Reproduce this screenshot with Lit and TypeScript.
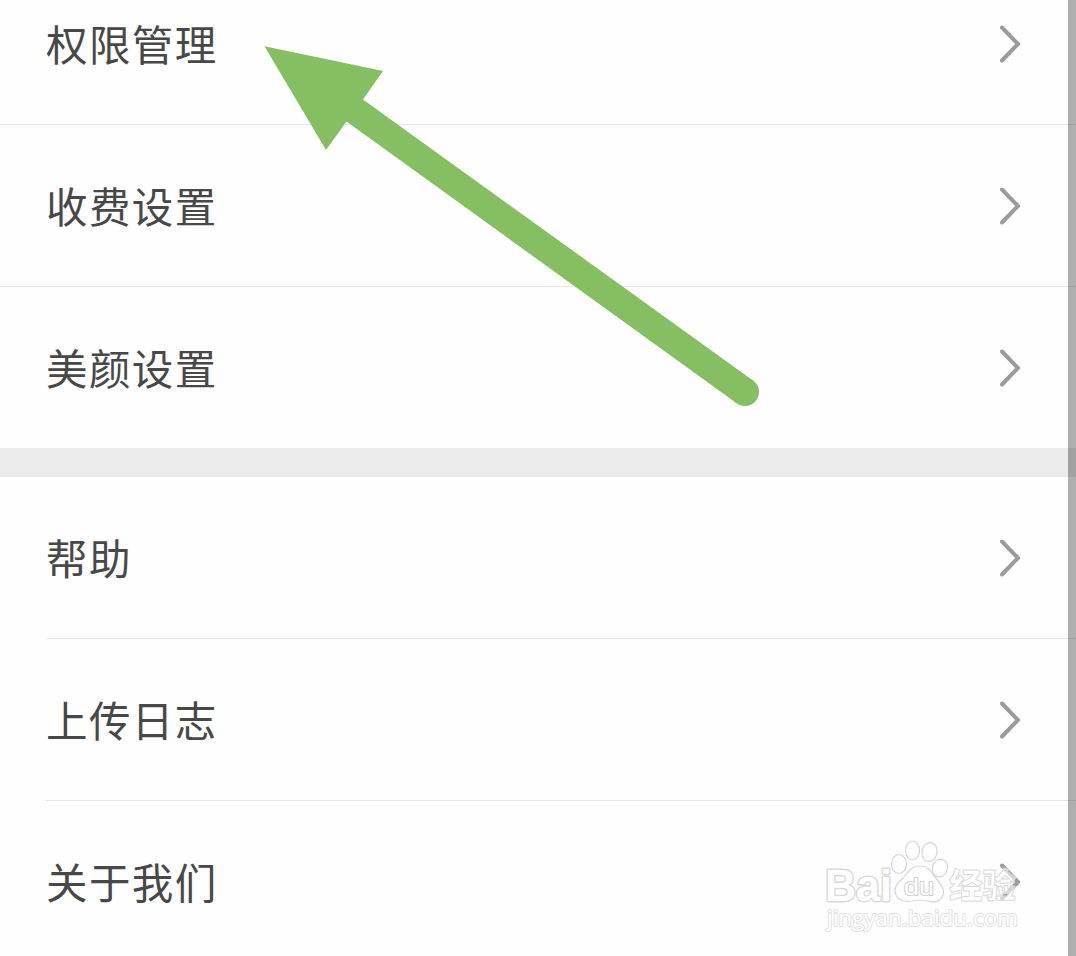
import { LitElement, html, css } from "lit";
import { customElement, property } from "lit/decorators.js";

@customElement("setting-row")
export class SettingRow extends LitElement {
  @property({ type: String }) public label = "";

  static styles = css`
    :host {
      display: block;
      height: 162px;
    }

    .row {
      box-sizing: border-box;
      height: 100%;
      display: flex;
      align-items: center;
      justify-content: space-between;
      padding: 0 54px 0 46px;
    }

    .label {
      font-size: 41.5px;
      line-height: 60px;
      letter-spacing: 1.4px;
      color: #484848;
      padding-bottom: 3px;
      white-space: nowrap;
    }

    .chevron {
      width: 24px;
      height: 40px;
      fill: none;
      stroke: #9b9b9b;
      stroke-width: 4;
      stroke-linecap: round;
      stroke-linejoin: round;
    }
  `;

  protected render() {
    return html`
      <div class="row">
        <span class="label">${this.label}</span>
        <svg class="chevron" viewBox="0 0 24 40">
          <path d="M4 3.500 L20 20 L4 36.500" />
        </svg>
      </div>
    `;
  }
}

@customElement("baidu-watermark")
export class BaiduWatermark extends LitElement {
  static styles = css`
    :host {
      display: block;
    }

    svg {
      display: block;
      width: 206px;
      height: 106px;
    }

    .shape {
      fill: #fff;
      fill-opacity: 0.6;
      stroke: #d6d6d6;
      stroke-width: 1.2;
    }

    .outline {
      font-family: "Liberation Sans", sans-serif;
      font-weight: 700;
      fill: #fff;
      stroke: #dadada;
      stroke-width: 1.2;
      stroke-linejoin: round;
    }

    .bai {
      stroke-width: 3;
      paint-order: stroke;
    }

    .du {
      font-weight: 400;
      stroke: #d0d0d0;
      stroke-width: 2;
      paint-order: stroke;
    }

    .cjk {
      font-family: "Noto Sans CJK SC", sans-serif;
      font-weight: 900;
      fill-opacity: 0.6;
      stroke-width: 1;
    }

    .url {
      font-family: "Open Sans", sans-serif;
      font-weight: 400;
      stroke: #e2e2e2;
      stroke-width: 2;
      paint-order: stroke;
    }
  `;

  protected render() {
    return html`
      <svg viewBox="820 836 206 106">
        <text class="outline bai" x="825" y="900.500" font-size="44" textLength="67" lengthAdjust="spacingAndGlyphs">Bai</text>
        <ellipse class="shape" cx="899" cy="864" rx="7.5" ry="9.5" />
        <ellipse class="shape" cx="912.5" cy="850.5" rx="7" ry="9.5" />
        <ellipse class="shape" cx="929.5" cy="852" rx="7.5" ry="9.5" transform="rotate(12 929.5 852)" />
        <ellipse class="shape" cx="940" cy="868" rx="7.5" ry="9" transform="rotate(15 940 868)" />
        <path
          class="shape"
          d="M919.500 866 C910 866 908 873 903 878 C897 883 893 889 896 895 C899 902 906 902 912 901 C917 900 922 900 927 901 C935 903 941 901 943 895 C945 889 940 883 935 877 C931 872 929 866 919.500 866 Z"
        />
        <text class="outline du" x="904" y="895" font-size="24" textLength="30" lengthAdjust="spacingAndGlyphs">du</text>
        <text class="outline cjk" x="949" y="898" font-size="34" textLength="67" lengthAdjust="spacingAndGlyphs">经验</text>
        <text class="outline url" x="827" y="926" font-size="22" textLength="191" lengthAdjust="spacingAndGlyphs">jingyan.baidu.com</text>
      </svg>
    `;
  }
}

@customElement("app-root")
export class AppRoot extends LitElement {
  static styles = css`
    :host {
      display: block;
      position: relative;
      width: 1076px;
      height: 956px;
      overflow: hidden;
      background: #fefefe;
      font-family: "Noto Sans CJK SC", sans-serif;
    }

    .list {
      margin-top: -37px;
    }

    .divider {
      height: 1px;
      margin-top: -1px;
      background: #e6e6e6;
    }

    .inset {
      margin-left: 46px;
    }

    .gap {
      height: 29px;
      margin-top: -1px;
      background: #ebebeb;
    }

    .scrollbar {
      position: absolute;
      top: 0;
      right: 0;
      width: 8px;
      height: 100%;
      background: rgba(0, 0, 0, 0.31);
    }

    .arrow {
      position: absolute;
      left: 260px;
      top: 40px;
      width: 510px;
      height: 376px;
      fill: #85bf62;
    }

    .watermark {
      position: absolute;
      left: 820px;
      top: 836px;
    }
  `;

  private _general = ["权限管理", "收费设置", "美颜设置"];
  private _support = ["帮助", "上传日志", "关于我们"];

  private _renderGroup(labels: string[], divider: string) {
    return labels.map(
      (label, i) => html`
        <setting-row .label=${label}></setting-row>
        ${i < labels.length - 1 ? html`<div class=${divider}></div>` : ""}
      `
    );
  }

  protected render() {
    return html`
      <div class="list">
        ${this._renderGroup(this._general, "divider")}
        <div class="gap"></div>
        ${this._renderGroup(this._support, "divider inset")}
      </div>
      <svg class="arrow" viewBox="260 40 510 376">
        <path
          d="M264.500 46.300 L383 71 L363 99.500 L753 380.500 L737 403.500 L346.500 121.500 L326 150 Z"
        />
        <circle cx="745" cy="392" r="14" />
      </svg>
      <baidu-watermark class="watermark"></baidu-watermark>
      <div class="scrollbar"></div>
    `;
  }
}
